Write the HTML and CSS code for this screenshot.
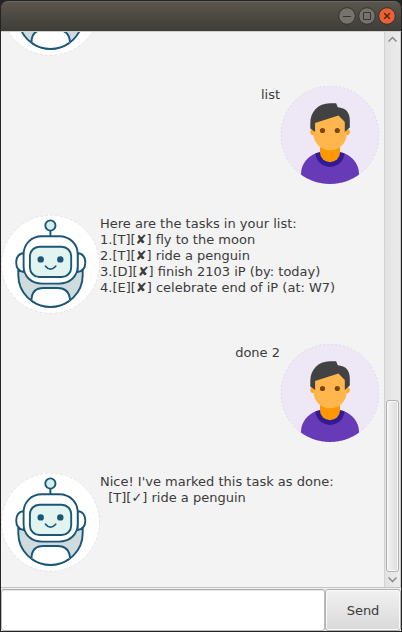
FILE: index.html
```html
<!DOCTYPE html>
<html lang="en">
<head>
<meta charset="utf-8">
<title>Chat</title>
<link rel="stylesheet" href="styles.css">
</head>
<body>
<svg class="defs" width="0" height="0">
  <symbol id="bot" viewBox="1 215 99 99">
    <circle cx="50.5" cy="264.3" r="49" fill="#fff" stroke="#dcdcdc" stroke-width=".7" stroke-dasharray="3 2"/>
    <g fill="#fff" stroke="#1b5677" stroke-width="1.9">
      <path d="M18.3 271v4a32.2 32 0 0 0 64.4 0v-4z" fill="#cfdbdd"/>
      <path d="M31.6 301v-1.500q1-12 12-12h14q11 0 12.400 12v1.500" stroke="none"/>
      <path d="M31.500 300.500q0-12.500 12-12.500h14q12 0 12.500 12.500"/>
      <path d="M31.500 300.700a32.200 32 0 0 0 38 0" />
      <path d="M24 253q-7.800 1-7.800 9.500t7.800 9.500zM77.500 253q7.800 1 7.800 9.500t-7.800 9.500z"/>
      <path d="M42 236.300h17c11 0 18.700 8 18.700 18v12c0 10-8 17.300-18.700 17.300H42c-10.700 0-18.400-7.300-18.400-17.300v-12c0-10 7.400-18 18.400-18z"/>
      <rect x="29.900" y="246.700" width="41.300" height="30.300" rx="9.500" fill="#e1f4f0"/>
      <path d="M50.400 231v5"/>
      <circle cx="50.400" cy="225.500" r="5.100" fill="#d3efeb"/>
      <path d="M45.500 266.200q4.900 6 10.200 0" fill="none" stroke-width="1.700" stroke-linecap="round"/>
    </g>
    <circle cx="40.700" cy="259.400" r="3.200" fill="#1b5677"/>
    <circle cx="60.300" cy="259.400" r="3.200" fill="#1b5677"/>
  </symbol>
  <symbol id="user" viewBox="280 86 99 99">
    <clipPath id="disc"><circle cx="330" cy="135" r="49"/></clipPath>
    <circle cx="330" cy="135" r="49" fill="#ede7f6" stroke="#cfc9dc" stroke-width=".7" stroke-dasharray="1.500 2.500"/>
    <g clip-path="url(#disc)">
      <path d="M301 185v-11c0-10 7-18 16-21.200h26c9 3.200 16 11.200 16 21.200v11z" fill="#673ab7"/>
      <path d="M315.300 153.600c1 8 7 13.300 14.700 13.300s13.500-5.300 14.500-13.300l-4.500-1.600h-20z" fill="#311b92"/>
      <path d="M320 144h20v8.300a10 10 0 0 1-20 0z" fill="#ff9800"/>
      <circle cx="313.400" cy="132" r="3.100" fill="#ffa726"/>
      <circle cx="346.700" cy="132" r="3.100" fill="#ffa726"/>
      <path d="M313.400 119q0-10 16.600-10t16.800 10v14.500a16.700 16.800 0 0 1-33.400 0z" fill="#ffb74d"/>
      <path d="M330 103.300c-12 0-19.700 8.700-19.700 20v5.200l4.800 3.500v-9l23.400-7.500 6.300 6.500v10l5-4.500v-7c0-8-4-12.700-12-13.300l-1.700-3.900z" fill="#424242"/>
      <circle cx="322.500" cy="130.500" r="2.600" fill="#784719"/>
      <circle cx="337.300" cy="130.500" r="2.600" fill="#784719"/>
    </g>
  </symbol>
</svg>
<div class="window">
  <header class="titlebar">
    <svg class="control" viewBox="0 0 18 18"><circle class="knob" cx="9" cy="9" r="8.300"/><path class="glyph" d="M5 9.500h8"/></svg>
    <svg class="control" viewBox="0 0 18 18"><circle class="knob" cx="9" cy="9" r="8.300"/><path class="glyph" d="M5.500 5.500h7v7h-7z"/></svg>
    <svg class="control close" viewBox="0 0 18 18"><circle class="knob" cx="9" cy="9" r="8.300"/><path class="glyph" d="M6.200 6.200l5.600 5.600M11.800 6.200l-5.600 5.600"/></svg>
  </header>
  <main class="chat">
    <div class="messages">
      <div class="message"><svg class="avatar"><use href="#bot"/></svg></div>
      <div class="message mine"><p class="text">list</p><svg class="avatar"><use href="#user"/></svg></div>
      <div class="message"><svg class="avatar"><use href="#bot"/></svg><p class="text">Here are the tasks in your list:
1.[T][✘] fly to the moon
2.[T][✘] ride a penguin
3.[D][✘] finish 2103 iP (by: today)
4.[E][✘] celebrate end of iP (at: W7)</p></div>
      <div class="message mine"><p class="text">done 2</p><svg class="avatar"><use href="#user"/></svg></div>
      <div class="message"><svg class="avatar"><use href="#bot"/></svg><p class="text">Nice! I've marked this task as done:
  [T][✓] ride a penguin</p></div>
    </div>
    <div class="scrollbar">
      <svg class="arrow" viewBox="0 0 15 15"><path d="M3.500 9.500l4-4 4 4"/></svg>
      <div class="track"><div class="thumb"></div></div>
      <svg class="arrow" viewBox="0 0 15 15"><path d="M3.500 5.500l4 4 4-4"/></svg>
    </div>
  </main>
  <footer class="composer">
    <input class="field" type="text" aria-label="Message">
    <button class="send" type="button">Send</button>
  </footer>
</div>
</body>
</html>
```
FILE: styles.css
```css
* { box-sizing: border-box; }

body {
  margin: 0;
  background: #242326;
  color: #3b3b3b;
  font: 13px/16px "DejaVu Sans", sans-serif;
}

.defs { display: block; }

.window {
  display: flex;
  flex-direction: column;
  width: 402px;
  height: 632px;
  padding: 1px;
}

.titlebar {
  display: flex;
  flex: none;
  align-items: center;
  justify-content: flex-end;
  gap: 2px;
  height: 30px;
  padding: 0 5px 1px 0;
  border-top: 1px solid #6a675e;
  border-radius: 7px 7px 0 0;
  background: linear-gradient(#5a564d, #3e3d38);
}

.control { width: 18px; height: 18px; }
.knob { fill: #75736c; stroke: #33322e; stroke-width: 1; }
.glyph { fill: none; stroke: #353430; stroke-width: 1; }
.close .knob { fill: #ec6038; }
.close .glyph { stroke: #4b2414; stroke-width: 1.4; }

.chat {
  display: flex;
  flex: none;
  height: 557px;
  border: 1px solid #c4c4c4;
  border-width: 1px 1px 1px 0;
  border-top-color: #cfcfcb;
  background: #f3f3f3;
}

.messages {
  display: flex;
  flex: 1;
  flex-direction: column;
  justify-content: flex-end;
  height: 555px;
  overflow: hidden;
}

.message {
  display: flex;
  flex: none;
  height: 129px;
  padding: 15px 0;
}

.mine { justify-content: flex-end; padding-right: 5px; }
.avatar { flex: none; width: 99px; height: 99px; }
.text { margin: 1px 0 0; white-space: pre; }

.scrollbar {
  display: flex;
  flex: none;
  flex-direction: column;
  width: 16px;
  border-left: 1px solid #d2d2d2;
  background: linear-gradient(90deg, #e2e2e2, #ececec);
}

.arrow {
  display: block;
  flex: none;
  width: 15px;
  height: 15px;
  fill: none;
  stroke: #858585;
  stroke-width: 1.4;
}

.track { display: flex; flex: 1; flex-direction: column; justify-content: flex-end; padding: 0 1px; }

.thumb {
  height: 172px;
  border: 1px solid #b0b0b0;
  border-radius: 3px;
  background: linear-gradient(90deg, #f3f3f3, #dcdcdc);
  box-shadow: inset 0 0 0 1px #fafafa;
}

.composer { display: flex; flex: 1; background: #f0f0f0; }

.field {
  width: 324px;
  height: 42px;
  margin: 1px 0 0;
  padding: 0 8px;
  border: 1px solid #bdbdbd;
  border-top-color: #ababab;
  border-radius: 3px;
  background: #fff;
  box-shadow: inset 0 1px 1px #e6e6e6;
  font: inherit;
}

.send {
  flex: 1;
  height: 42px;
  margin: 1px 0 0;
  padding: 2px 0 0;
  border: 1px solid #b0b0b0;
  border-radius: 3px;
  background: linear-gradient(#f1f1f1, #d9d9d9);
  box-shadow: inset 0 0 0 1px #fafafa;
  color: inherit;
  font: inherit;
}
```
